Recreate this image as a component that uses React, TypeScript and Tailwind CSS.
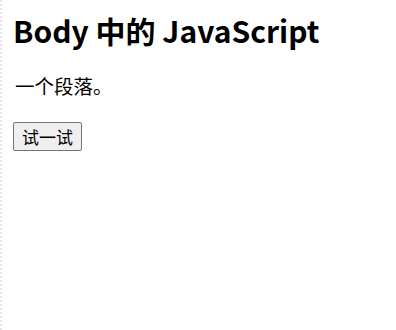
export default function App() {
  return (
    <div
      className="min-h-[330px] w-[396px] border-l-2 border-dotted border-gray-200 bg-white pl-[11px] pt-[8px] text-black"
      style={{ fontFamily: '"Noto Sans CJK SC", "Noto Sans", sans-serif' }}
    >
      <h1 className="text-[30px] font-bold leading-[44px]">Body 中的 JavaScript</h1>
      <p className="mt-[21px] pl-[2px] text-[19.5px] leading-[26px]">一个段落。</p>
      <button className="mt-[23px] rounded-[2px] border border-[#767676] bg-[#efefef] px-[8px] py-[1px] text-[17px] leading-[25px]">
        试一试
      </button>
    </div>
  );
}
